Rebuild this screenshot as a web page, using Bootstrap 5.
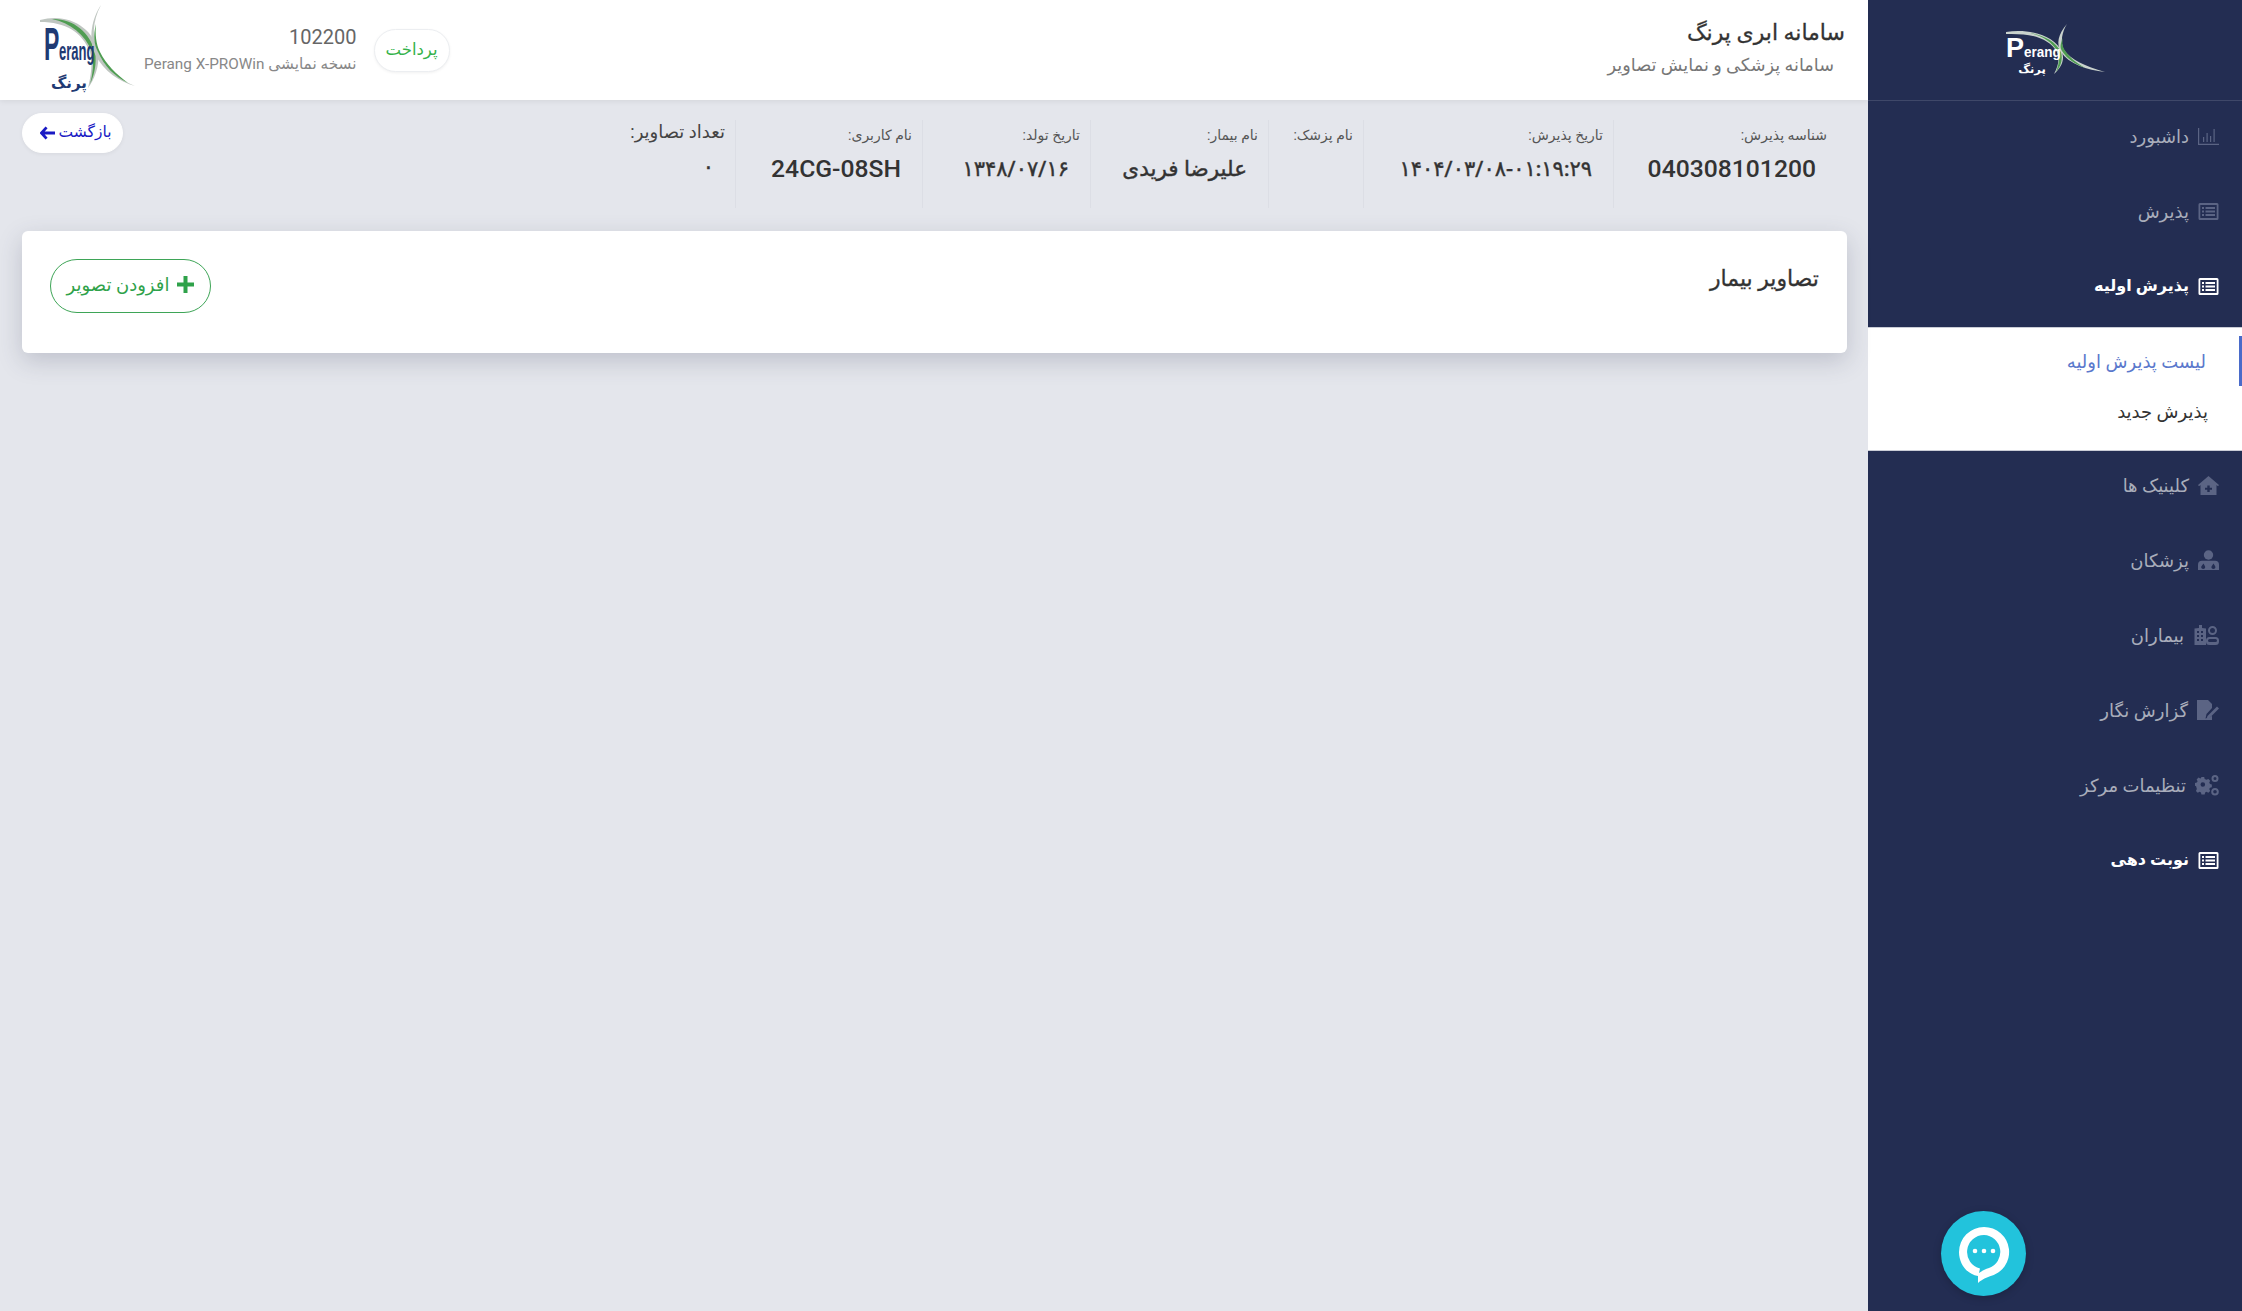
<!DOCTYPE html>
<html lang="fa" dir="rtl">
<head>
  <meta charset="UTF-8">
  <meta name="viewport" content="width=device-width, initial-scale=1.0">
  <title>سامانه ابری پرنگ</title>
  <link href="https://cdn.jsdelivr.net/npm/bootstrap@5.3.0/dist/css/bootstrap.min.css" rel="stylesheet">
  <style>
    body { background: #e4e6ec; font-family: Roboto, "DejaVu Sans", sans-serif; height: 1311px; overflow: hidden; }
    .logo-art text { direction: ltr; unicode-bidi: normal; }
    .logo-left { margin-right: -8px; }

    /* sidebar */
    .side-bar { width: 374px; flex: none; background: #232d52; height: 1311px; }
    .side-logo { height: 101px; border-bottom: 1px solid #3f4869; }
    .side-menu { padding-top: 9px; }
    .side-item { height: 52px; margin-bottom: 23px; padding-right: 23px; gap: 9px; color: #a9adbb; font-size: 18px; text-decoration: none; }
    .side-item svg { width: 21px; height: 21px; flex: none; fill: #5b6484; }
    .side-item.on { color: #fff; font-weight: 700; font-size: 16px; }
    .side-item.on svg { fill: #fff; }
    .side-item.side-group { margin-bottom: 15px; }
    .sub-panel { background: #fff; height: 124px; margin-bottom: 8px; padding-top: 8px; border-top: 1px solid #c9ccd6; border-bottom: 1px solid #c9ccd6; }
    .sub-item { height: 50px; padding-right: 34px; color: #333; font-size: 18px; text-decoration: none; }
    .sub-item.on { color: #5a78cc; border-right: 3px solid #4a6bc9; padding-right: 33px; }
    .chat-btn { width: 85px; height: 85px; border-radius: 50%; background: #22c3dc; left: 73px; top: 1211px; box-shadow: 0 2px 8px rgba(0,0,0,.2); }

    /* top bar */
    .top-bar { height: 100px; background: #fff; padding: 0 23px 0 38px; box-shadow: 0 1px 6px rgba(0,0,0,.08); }
    .top-title { font-size: 22px; color: #333; margin-top: 16px; -webkit-text-stroke: .3px #333; }
    .top-sub { font-size: 17.700px; color: #777; margin-top: 3px; padding-right: 11px; }
    .top-left { gap: 17px; }
    .build-no { font-size: 20px; color: #666; line-height: 22px; margin-bottom: 6px; }
    .build-sub { font-size: 15.300px; color: #888; line-height: 20px; }
    .pay-btn { --bs-btn-color: #35b24a; --bs-btn-bg: #fff; --bs-btn-border-color: #eceef1; width: 76px; height: 43px; padding: 0; font-size: 16.500px; border-radius: 22px; box-shadow: 0 1px 3px rgba(0,0,0,.06); }

    /* patient info */
    .info-wrap { padding: 13px 31px 0 22px; }
    .info-strip { display: grid; grid-template-columns: 224px 250px 95px 178px 168px 187px 150px; height: 120px; padding-top: 7px; }
    .info-cell { padding-right: 10px; border-left: 1px solid #dcdee5; height: 88px; }
    .info-cell:last-child { border-left: 0; }
    .info-label { font-size: 14px; color: #555; line-height: 18px; margin-top: 6px; }
    .info-value { font-size: 24.700px; font-weight: 500; color: #333; line-height: 30px; margin-top: 10px; padding-right: 11px; white-space: nowrap; }
    .info-value.fa-num { font-size: 21px; -webkit-text-stroke: .4px #333; }
    .info-value.fa-name { font-size: 21.500px; -webkit-text-stroke: .4px #333; }
    .count-label { font-size: 18px; color: #444; line-height: 20px; margin-top: 2px; }
    .back-btn { --bs-btn-color: #1a1ac4; --bs-btn-bg: #fff; --bs-btn-border-color: #fff; height: 40px; width: 101px; padding: 0 0 0 6px; font-size: 15.500px; border-radius: 20px; box-shadow: 0 1px 4px rgba(0,0,0,.06); }

    /* image card */
    .img-card { margin: -2px 21px 0 22px; height: 122px; border: 0; border-radius: 6px; box-shadow: 0 8px 24px rgba(60,65,90,.22); padding: 28px 28px 0 28px; }
    .img-title { font-size: 22px; color: #333; margin: 0; line-height: 40px; -webkit-text-stroke: .3px #333; }
    .add-btn { --bs-btn-color: #2fa24a; --bs-btn-border-color: #3ea557; --bs-btn-bg: #fff; width: 161px; height: 54px; padding: 0 0 4px; font-size: 18px; border-radius: 27px; }
  </style>
</head>
<body class="d-flex">

  <svg width="0" height="0" class="position-absolute">
    <symbol id="ic-list" viewBox="0 0 21 21">
      <path fill-rule="evenodd" d="M2 2h17a1.500 1.500 0 0 1 1.500 1.500v14a1.500 1.500 0 0 1-1.500 1.500H2a1.500 1.500 0 0 1-1.500-1.500v-14A1.500 1.500 0 0 1 2 2zm.3 2v13h16.400V4zM4 6h2v2H4zm3.500 0H17v2H7.500zM4 9.500h2v2H4zm3.500 0H17v2H7.500zM4 13h2v2H4zm3.500 0H17v2H7.500z"/>
    </symbol>
    <symbol id="ic-chart" viewBox="0 0 21 21">
      <path d="M0 2h1.200v15.800H21V19H0zM5 11h1.200v5H5zm3.500-4h1.200v9H8.500zm3.500 3h1.200v6H12zm3.500-7h1.200v13h-1.200z"/>
    </symbol>
    <symbol id="ic-home" viewBox="0 0 21 21">
      <path fill-rule="evenodd" d="M10.500 1 21 10l-1 1.200-1.500-1.200V20h-16V10L1 11.200 0 10zM9.300 10.500v2.200H7v2h2.300V17h2.400v-2.300H14v-2h-2.300v-2.200z"/>
    </symbol>
    <symbol id="ic-doctor" viewBox="0 0 21 21">
      <circle cx="10.500" cy="5" r="4.700"/>
      <path fill-rule="evenodd" d="M4 10.800h13a4 4 0 0 1 4 4V20H0v-5.200a4 4 0 0 1 4-4zM5.500 13.500 3.300 16.500a2 2 0 1 0 3.800 0zm10 0-2 3a2 2 0 1 0 3.800 0z"/>
    </symbol>
    <symbol id="ic-patient" viewBox="0 0 26 21">
      <path fill-rule="evenodd" d="M1.500 3.500 6 3V0h3v3l4 .5V20H1.500zM4 6v2h2V6zm4 0h2v2H8zM4 10v2h2v-2zm4 0h2v2H8zM4 14v2h2v-2zm4 0h2v2H8z"/>
      <path fill-rule="evenodd" d="M19.500 1a4.500 4.500 0 1 1 0 9 4.500 4.500 0 0 1 0-9zm0 2a2.500 2.500 0 1 0 0 5 2.500 2.500 0 0 0 0-5zM16.500 12h6a3.500 3.500 0 0 1 3.500 3.500v1a3.500 3.500 0 0 1-3.500 3.500h-6a3.500 3.500 0 0 1-3.500-3.500v-1a3.500 3.500 0 0 1 3.500-3.500zm0 2a1.500 1.500 0 0 0 0 3h6a1.500 1.500 0 0 0 0-3z"/>
    </symbol>
    <symbol id="ic-report" viewBox="0 0 22 21">
      <path d="M0 0h11l4 4v4l-5.500 6-1 4.500 5-1.500 1.500-1.500V20H0zM3 15.500l1.500-2 1.500 1.500 1-1 .5 1.500H3z"/>
      <path d="M20 6.500l2 2-9.500 9.500-3 1 1-3z"/>
    </symbol>
    <symbol id="ic-gears" viewBox="0 0 24 21">
      <path fill-rule="evenodd" d="M7 5h3l.5 2 2 1 2-1 2 2-1 2 .8 1.500 2 .5v3l-2 .5-.8 1.500 1 2-2 2-2-1-1.500.8-.5 2H7l-.5-2-1.500-.8-2 1-2-2 1-2L1.200 15 0 14.500v-3l2-.5.8-1.500-1-2 2-2 2 1L6.500 6zm1.500 5.500a2.500 2.500 0 1 0 0 5 2.500 2.500 0 0 0 0-5z" transform="translate(0 -2.500) scale(.92)"/>
      <path fill-rule="evenodd" d="M20 0a3.500 3.500 0 1 1 0 7 3.500 3.500 0 0 1 0-7zm0 2a1.500 1.500 0 1 0 0 3 1.500 1.500 0 0 0 0-3zM20 13a3.800 3.800 0 1 1 0 7.600 3.800 3.800 0 0 1 0-7.600zm0 2a1.800 1.800 0 1 0 0 3.600 1.800 1.800 0 0 0 0-3.600z"/>
    </symbol>
  </svg>

  <aside class="side-bar position-relative">
    <div class="side-logo d-flex align-items-center justify-content-center">
      <svg class="logo-art" width="100" height="52" viewBox="0 0 100 52">
        <path d="M1 8C25 4 50 12 57 28 60 36 56 44 49 50 53 42 55 36 52 28 44 14 25 9 1 10z" fill="#c9d2cd"/>
        <path d="M20 8C36 10 50 16 56 28 58 36 56 42 51 48 54 40 55 34 53 28 46 16 34 10 20 8z" fill="#4f9d52"/>
        <path d="M62 0C53 10 51 20 56 28 64 40 82 46 100 48 80 42 66 36 59 26 55 18 57 8 62 0z" fill="#c9d2cd"/>
        <path d="M58 14C55 20 55 24 57 27 62 35 70 40 80 44 70 38 63 32 59 25 57 21 57 18 58 14z" fill="#4f9d52"/>
        <text x="1" y="33" font-family="Liberation Sans" font-size="27" font-weight="700" fill="#fff">P</text>
        <text transform="translate(19 33) scale(.9 1)" font-family="Liberation Sans" font-size="15" font-weight="700" fill="#fff">erang</text>
        <text x="27" y="49" font-family="DejaVu Sans" font-size="11.500" font-weight="700" fill="#fff" text-anchor="middle">پرنگ</text>
      </svg>
    </div>
    <nav class="side-menu">
      <a class="side-item d-flex align-items-center" href="#"><svg><use href="#ic-chart"/></svg><span>داشبورد</span></a>
      <a class="side-item d-flex align-items-center" href="#"><svg><use href="#ic-list"/></svg><span>پذیرش</span></a>
      <a class="side-item on d-flex align-items-center side-group" href="#"><svg><use href="#ic-list"/></svg><span>پذیرش اولیه</span></a>
      <div class="sub-panel">
        <a class="sub-item on d-flex align-items-center" href="#">لیست پذیرش اولیه</a>
        <a class="sub-item d-flex align-items-center" href="#">پذیرش جدید</a>
      </div>
      <a class="side-item d-flex align-items-center" href="#"><svg><use href="#ic-home"/></svg><span>کلینیک ها</span></a>
      <a class="side-item d-flex align-items-center" href="#"><svg><use href="#ic-doctor"/></svg><span>پزشکان</span></a>
      <a class="side-item d-flex align-items-center" href="#"><svg style="width:26px"><use href="#ic-patient"/></svg><span>بیماران</span></a>
      <a class="side-item d-flex align-items-center" href="#"><svg style="width:22px"><use href="#ic-report"/></svg><span>گزارش نگار</span></a>
      <a class="side-item d-flex align-items-center" href="#"><svg style="width:24px"><use href="#ic-gears"/></svg><span>تنظیمات مرکز</span></a>
      <a class="side-item on d-flex align-items-center" href="#"><svg><use href="#ic-list"/></svg><span>نوبت دهی</span></a>
    </nav>
    <a class="chat-btn position-absolute d-flex align-items-center justify-content-center" href="#">
      <svg width="52" height="60" viewBox="0 0 52 60">
        <path fill="#fff" fill-rule="evenodd" d="M26 3a25 25 0 0 1 6 49.300C27 54 22 57 20 59v-7C8 50 1 39 1 28A25 25 0 0 1 26 3zm0 8a17 17 0 0 0-4 33.500l0 0L21 49c3-2 6-4 10-5A17 17 0 0 0 26 11z"/>
        <circle cx="17" cy="27" r="2.300" fill="#fff"/><circle cx="26" cy="27" r="2.300" fill="#fff"/><circle cx="35" cy="27" r="2.300" fill="#fff"/>
      </svg>
    </a>
  </aside>

  <div class="flex-grow-1">
    <header class="top-bar d-flex justify-content-between">
      <div>
        <div class="top-title">سامانه ابری پرنگ</div>
        <div class="top-sub">سامانه پزشکی و نمایش تصاویر</div>
      </div>
      <div class="top-left d-flex align-items-center">
        <button class="btn pay-btn">پرداخت</button>
        <div>
          <div class="build-no">102200</div>
          <div class="build-sub">نسخه نمایشی Perang X-PROWin</div>
        </div>
        <svg class="logo-art logo-left" width="97" height="96" viewBox="0 0 97 96">
          <path d="M2 18C30 10 56 26 60 50 62 64 56 78 50 86 53 74 55 60 52 50 44 30 28 20 2 20z" fill="#bfc6c1"/>
          <path d="M14 17C34 16 52 30 57 50 59 62 56 74 52 82 55 72 56 60 54 50 47 32 32 21 14 17z" fill="#4f9d52"/>
          <path d="M63 3C54 20 54 36 60 50 68 68 82 78 97 84 82 80 66 70 57 52 50 36 54 16 63 3z" fill="#bfc6c1"/>
          <path d="M58 22C55 34 56 42 60 50 66 64 76 74 90 81 78 72 68 62 62 50 58 42 57 32 58 22z" fill="#4f9d52"/>
          <text transform="translate(6 58) scale(.5 1)" font-family="Liberation Sans" font-size="46" font-weight="700" fill="#1f3a73">P</text>
          <text transform="translate(21 58) scale(.5 1)" font-family="Liberation Sans" font-size="26" font-weight="700" fill="#1f3a73">erang</text>
          <text x="31" y="86" font-family="DejaVu Sans" font-size="15" font-weight="700" fill="#1f3a73" text-anchor="middle">پرنگ</text>
        </svg>
      </div>
    </header>

    <div class="info-wrap d-flex justify-content-between">
      <div class="info-strip">
        <div class="info-cell"><div class="info-label">شناسه پذیرش:</div><div class="info-value">040308101200</div></div>
        <div class="info-cell"><div class="info-label">تاریخ پذیرش:</div><div class="info-value fa-num"><bdo dir="ltr">۱۴۰۴/۰۳/۰۸-۰۱:۱۹:۲۹</bdo></div></div>
        <div class="info-cell"><div class="info-label">نام پزشک:</div></div>
        <div class="info-cell"><div class="info-label">نام بیمار:</div><div class="info-value fa-name">علیرضا فریدی</div></div>
        <div class="info-cell"><div class="info-label">تاریخ تولد:</div><div class="info-value fa-num"><bdo dir="ltr">۱۳۴۸/۰۷/۱۶</bdo></div></div>
        <div class="info-cell"><div class="info-label">نام کاربری:</div><div class="info-value">24CG-08SH</div></div>
        <div class="info-cell"><div class="count-label">تعداد تصاویر:</div><div class="info-value fa-num">۰</div></div>
      </div>
      <button class="btn back-btn d-flex align-items-center justify-content-center gap-1">بازگشت
        <svg width="15" height="14" viewBox="0 0 16 14"><path d="M7 1 1.500 7 7 13M2 7h14" fill="none" stroke="#1a1ac4" stroke-width="3"/></svg>
      </button>
    </div>

    <div class="card img-card flex-row justify-content-between">
      <h5 class="img-title">تصاویر بیمار</h5>
      <button class="btn add-btn d-flex align-items-center justify-content-center gap-2">
        <svg width="17" height="17" viewBox="0 0 17 17"><path d="M6.500 0h4v6.500H17v4h-6.500V17h-4v-6.500H0v-4h6.500z" fill="#2fa24a"/></svg>
        افزودن تصویر
      </button>
    </div>
  </div>

<script src="https://cdn.jsdelivr.net/npm/bootstrap@5.3.0/dist/js/bootstrap.bundle.min.js"></script>
</body>
</html>
